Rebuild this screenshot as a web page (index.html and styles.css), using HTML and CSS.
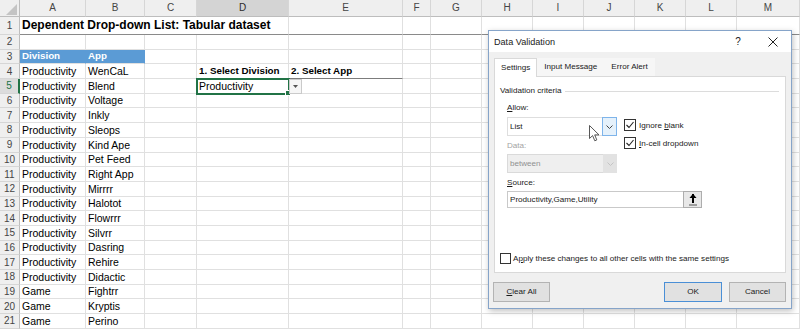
FILE: index.html
```html
<!DOCTYPE html>
<html>
  <head>
  <meta charset="utf-8">
  <title>Data Validation - Dependent Drop-down List</title>
  <link rel="stylesheet" href="styles.css">
  </head>
  <body>
  <div class="workbook">

    <table class="sheet">
      <colgroup>
        <col class="w-row"><col class="w-a"><col class="w-b"><col class="w-c"><col class="w-d"><col class="w-e"><col class="w-f">
        <col class="w-std"><col class="w-std"><col class="w-std"><col class="w-std"><col class="w-std"><col class="w-std"><col class="w-m">
      </colgroup>
      <tr class="r-head">
        <th class="corner"><svg width="12" height="12" viewBox="0 0 12 12"><path d="M12 1 L12 12 L1 12 Z" fill="#c4c4c4"/></svg></th>
        <th>A</th><th>B</th><th>C</th><th class="col-sel">D</th><th>E</th><th>F</th><th>G</th><th>H</th><th>I</th><th>J</th><th>K</th><th>L</th><th>M</th>
      </tr>
      <tr class="r-title">
        <th>1</th><td colspan="4" class="title">Dependent Drop-down List: Tabular dataset</td>
        <td></td><td></td><td></td><td></td><td></td><td></td><td></td><td></td><td></td>
      </tr>
      <tr><th>2</th><td></td><td></td><td></td><td></td><td></td><td></td><td></td><td></td><td></td><td></td><td></td><td></td><td></td></tr>
      <tr><th>3</th><td class="tbl-head">Division</td><td class="tbl-head">App</td><td></td><td></td><td></td><td></td><td></td><td></td><td></td><td></td><td></td><td></td><td></td></tr>
      <tr><th>4</th><td>Productivity</td><td>WenCaL</td><td></td><td class="prompt">1. Select Division</td><td class="prompt">2. Select App</td><td></td><td></td><td></td><td></td><td></td><td></td><td></td><td></td></tr>
      <tr><th class="row-sel">5</th><td>Productivity</td><td>Blend</td><td></td>
        <td class="active">Productivity<span class="handle"></span><span class="cell-drop"><svg width="5" height="3" viewBox="0 0 5 3"><path d="M0 0 H5 L2.5 3 Z" fill="#555"/></svg></span></td>
        <td></td><td></td><td></td><td></td><td></td><td></td><td></td><td></td><td></td></tr>
      <tr><th>6</th><td>Productivity</td><td>Voltage</td><td></td><td></td><td></td><td></td><td></td><td></td><td></td><td></td><td></td><td></td><td></td></tr>
      <tr><th>7</th><td>Productivity</td><td>Inkly</td><td></td><td></td><td></td><td></td><td></td><td></td><td></td><td></td><td></td><td></td><td></td></tr>
      <tr><th>8</th><td>Productivity</td><td>Sleops</td><td></td><td></td><td></td><td></td><td></td><td></td><td></td><td></td><td></td><td></td><td></td></tr>
      <tr><th>9</th><td>Productivity</td><td>Kind Ape</td><td></td><td></td><td></td><td></td><td></td><td></td><td></td><td></td><td></td><td></td><td></td></tr>
      <tr><th>10</th><td>Productivity</td><td>Pet Feed</td><td></td><td></td><td></td><td></td><td></td><td></td><td></td><td></td><td></td><td></td><td></td></tr>
      <tr><th>11</th><td>Productivity</td><td>Right App</td><td></td><td></td><td></td><td></td><td></td><td></td><td></td><td></td><td></td><td></td><td></td></tr>
      <tr><th>12</th><td>Productivity</td><td>Mirrrr</td><td></td><td></td><td></td><td></td><td></td><td></td><td></td><td></td><td></td><td></td><td></td></tr>
      <tr><th>13</th><td>Productivity</td><td>Halotot</td><td></td><td></td><td></td><td></td><td></td><td></td><td></td><td></td><td></td><td></td><td></td></tr>
      <tr><th>14</th><td>Productivity</td><td>Flowrrr</td><td></td><td></td><td></td><td></td><td></td><td></td><td></td><td></td><td></td><td></td><td></td></tr>
      <tr><th>15</th><td>Productivity</td><td>Silvrr</td><td></td><td></td><td></td><td></td><td></td><td></td><td></td><td></td><td></td><td></td><td></td></tr>
      <tr><th>16</th><td>Productivity</td><td>Dasring</td><td></td><td></td><td></td><td></td><td></td><td></td><td></td><td></td><td></td><td></td><td></td></tr>
      <tr><th>17</th><td>Productivity</td><td>Rehire</td><td></td><td></td><td></td><td></td><td></td><td></td><td></td><td></td><td></td><td></td><td></td></tr>
      <tr><th>18</th><td>Productivity</td><td>Didactic</td><td></td><td></td><td></td><td></td><td></td><td></td><td></td><td></td><td></td><td></td><td></td></tr>
      <tr><th>19</th><td>Game</td><td>Fightrr</td><td></td><td></td><td></td><td></td><td></td><td></td><td></td><td></td><td></td><td></td><td></td></tr>
      <tr><th>20</th><td>Game</td><td>Kryptis</td><td></td><td></td><td></td><td></td><td></td><td></td><td></td><td></td><td></td><td></td><td></td></tr>
      <tr><th>21</th><td>Game</td><td>Perino</td><td></td><td></td><td></td><td></td><td></td><td></td><td></td><td></td><td></td><td></td><td></td></tr>
    </table>

    <!-- Data Validation dialog -->
    <div class="dialog">
      <div class="dlg-title">
        <span class="dlg-name">Data Validation</span>
        <span class="dlg-help">?</span>
        <span class="dlg-close"><svg width="10" height="10" viewBox="0 0 10 10"><path d="M0.5 0.5 L9.5 9.5 M9.5 0.5 L0.5 9.5" stroke="#222" stroke-width="1" fill="none"/></svg></span>
      </div>
      <div class="dlg-body">
        <div class="tabs">
          <span class="tab active">Settings</span>
          <span class="tab">Input Message</span>
          <span class="tab">Error Alert</span>
        </div>
        <div class="panel">
          <div class="group-head">Validation criteria</div>
          <div class="criteria">
            <div class="criteria-left">
              <div class="label"><u>A</u>llow:</div>
              <div class="combo">
                <span class="combo-text">List</span>
                <span class="combo-btn hover"><svg width="7" height="4" viewBox="0 0 7 4"><path d="M0.5 0.5 L3.5 3.5 L6.5 0.5" stroke="#444" fill="none"/></svg></span>
              </div>
              <div class="label off">Data:</div>
              <div class="combo disabled">
                <span class="combo-text">between</span>
                <span class="combo-btn"><svg width="7" height="4" viewBox="0 0 7 4"><path d="M0.5 0.5 L3.5 3.5 L6.5 0.5" stroke="#c4c4c4" fill="none"/></svg></span>
              </div>
            </div>
            <div class="criteria-right">
              <div class="check">
                <span class="box"><svg width="10" height="10" viewBox="0 0 10 10"><path d="M1.5 5 L4 7.5 L8.5 2" stroke="#222" stroke-width="1.1" fill="none"/></svg></span>
                <span>Ignore <u>b</u>lank</span>
              </div>
              <div class="check">
                <span class="box"><svg width="10" height="10" viewBox="0 0 10 10"><path d="M1.5 5 L4 7.5 L8.5 2" stroke="#222" stroke-width="1.1" fill="none"/></svg></span>
                <span><u>I</u>n-cell dropdown</span>
              </div>
            </div>
          </div>
          <div class="field">
            <div class="label"><u>S</u>ource:</div>
            <div class="source">
              <span class="combo-text">Productivity,Game,Utility</span>
              <span class="ref-btn"><svg width="10" height="13" viewBox="0 0 10 13"><path d="M5 1 L5 10" stroke="#000" stroke-width="2"/><path d="M1.5 5 L5 0.8 L8.5 5 Z" fill="#000"/><path d="M1 12 H9" stroke="#555" stroke-width="1"/></svg></span>
            </div>
          </div>
          <div class="check apply">
            <span class="box small"></span>
            <span>A<u>p</u>ply these changes to all other cells with the same settings</span>
          </div>
        </div>
        <div class="buttons">
          <span class="btn clear"><u>C</u>lear All</span>
          <span class="btn ok">OK</span>
          <span class="btn">Cancel</span>
        </div>
      </div>
    </div>

    <svg class="cursor" width="11" height="17" viewBox="0 0 11 17"><path d="M0.5 0.5 L0.5 13.5 L3.6 10.6 L5.8 15.8 L7.8 14.9 L5.7 9.9 L10 9.9 Z" fill="#fff" stroke="#444" stroke-width="0.9"/></svg>
  </div>
  </body>
</html>
```

FILE: styles.css
```css
body {
  margin: 0;
  background-color: white;
  overflow: hidden;
}

.workbook {
  position: relative;
  width: 800px;
  height: 331px;
  overflow: hidden;
  font-family: "Liberation Sans", Arial, sans-serif;
}

/* ---------- spreadsheet ---------- */
.sheet {
  border-collapse: separate;
  border-spacing: 0;
  table-layout: fixed;
  width: 800px;
}
.w-row { width: 20px; }
.w-a { width: 66px; }
.w-b { width: 59px; }
.w-c { width: 52px; }
.w-d { width: 92px; }
.w-e { width: 114px; }
.w-f { width: 28px; }
.w-std { width: 51px; }
.w-m { width: 63px; }

.sheet tr { height: 14.7px; }
.sheet tr.r-head { height: 16.5px; }
.sheet tr.r-title { height: 18.5px; }

.sheet td {
  border-right: 1px solid #e0e0e0;
  border-bottom: 1px solid #e0e0e0;
  padding: 0 2px 1px 2px;
  font-size: 10.5px;
  line-height: 12px;
  vertical-align: bottom;
  white-space: nowrap;
  color: #000;
  overflow: visible;
}

.sheet th {
  background-color: #efefef;
  color: #454545;
  font-weight: normal;
  font-size: 10px;
  padding: 0;
  text-align: center;
  vertical-align: middle;
  border-right: 1px solid #d6d6d6;
  border-bottom: 1px solid #d6d6d6;
}
.sheet tr.r-head th {
  border-bottom: 1px solid #bdbdbd;
}
.sheet tr th:first-child {
  border-right: 1px solid #bdbdbd;
}
.sheet th.corner {
  text-align: right;
  vertical-align: bottom;
  padding: 0 2px 1px 0;
  line-height: 0;
}
.sheet th.col-sel {
  background-color: #d4d4d4;
  color: #2b2b2b;
  border-bottom: 2px solid #217346;
}
.sheet tr th.row-sel {
  background-color: #dcdcdc;
  color: #217346;
  border-right: 2px solid #217346;
}

.sheet td.title {
  font-weight: bold;
  font-size: 12px;
  line-height: 14px;
  padding-bottom: 2px;
}
.sheet tr.r-title td {
  border-bottom: 1px solid #8a8a8a;
}
.sheet td.tbl-head {
  background-color: #5b9bd5;
  border-right-color: #5b9bd5;
  color: white;
  font-weight: bold;
  font-size: 9.8px;
}
.sheet td.prompt {
  font-weight: bold;
  font-size: 9.8px;
  border-bottom: 1px solid #7c7c7c;
}
.sheet td.active {
  position: relative;
  outline: 2px solid #217346;
  outline-offset: -1px;
}
.handle {
  position: absolute;
  right: -3px;
  bottom: -3px;
  width: 4px;
  height: 4px;
  background-color: #217346;
  border: 1px solid white;
}
.cell-drop {
  position: absolute;
  top: 0;
  right: -14px;
  width: 11px;
  height: 13px;
  background-color: #f6f6f6;
  border: 1px solid #cacaca;
  display: flex;
  align-items: center;
  justify-content: center;
}

/* ---------- dialog ---------- */
.dialog {
  position: absolute;
  left: 488px;
  top: 30px;
  width: 304px;
  height: 279px;
  box-sizing: border-box;
  border: 1px solid #86a4c9;
  background-color: #f0f0f0;
  box-shadow: 1px 2px 6px rgba(0, 0, 0, 0.25);
  font-size: 8.1px;
  color: #1a1a1a;
}

.dlg-title {
  height: 21px;
  background-color: white;
  display: flex;
  align-items: center;
  padding-left: 5px;
}
.dlg-name {
  font-size: 9.1px;
  flex: 1;
}
.dlg-help {
  width: 10px;
  text-align: center;
  font-size: 10px;
}
.dlg-close {
  width: 20px;
  margin-left: 20px;
  margin-right: 8px;
  display: flex;
  justify-content: center;
}

.dlg-body {
  padding: 6px 5px 0 5px;
}

.tabs {
  display: flex;
  height: 19px;
  margin-bottom: -1px;
  position: relative;
  z-index: 1;
}
.tab {
  height: 18px;
  line-height: 18px;
  padding: 0 7px;
  background-color: #f6f6f6;
}
.tab.active {
  padding: 0 6px;
  height: 19px;
  background-color: white;
  border: 1px solid #d9d9d9;
  border-bottom: none;
  box-sizing: border-box;
  line-height: 17px;
}

.panel {
  height: 197px;
  box-sizing: border-box;
  border: 1px solid #d9d9d9;
  background-color: white;
  padding: 0 5px;
}

.group-head {
  margin-top: 7px;
  height: 14px;
  line-height: 14px;
  display: flex;
  align-items: center;
}
.group-head::after {
  content: "";
  flex: 1;
  border-top: 1px solid #dcdcdc;
  margin-left: 4px;
  margin-right: 1px;
}

.label {
  height: 12px;
  line-height: 12px;
  margin-top: 4px;
}
.label.off {
  color: #a3a3a3;
}

.criteria {
  display: flex;
  padding-left: 7px;
}
.criteria-left {
  width: 110px;
}
.criteria-right {
  margin-left: 7px;
  padding-top: 21px;
  display: flex;
  flex-direction: column;
  gap: 6px;
}

.combo {
  margin-top: 3px;
  height: 19px;
  box-sizing: border-box;
  border: 1px solid #dedede;
  display: flex;
  align-items: stretch;
}
.combo.disabled {
  margin-top: 2px;
  background-color: #efefef;
  border-color: #dadada;
  color: #8f8f8f;
}
.combo-text {
  flex: 1;
  padding-left: 2px;
  line-height: 17px;
  white-space: nowrap;
}
.combo-btn {
  width: 14px;
  display: flex;
  align-items: center;
  justify-content: center;
  margin: -1px -1px -1px 0;
}
.combo-btn.hover {
  background-color: #e5f1fb;
  border: 1px solid #7eb4ea;
  width: 13px;
}
.combo.disabled .combo-btn {
  background-color: #e2e2e2;
}

.check {
  display: flex;
  align-items: center;
  height: 12px;
  gap: 3px;
  white-space: nowrap;
}
.box {
  width: 12px;
  height: 12px;
  box-sizing: border-box;
  border: 1px solid #333;
  background-color: white;
  display: flex;
  align-items: center;
  justify-content: center;
}
.box.small {
  width: 11px;
  height: 11px;
}

.field {
  padding-left: 7px;
}
.source {
  margin-top: 2px;
  width: 195px;
  height: 17px;
  box-sizing: border-box;
  border: 1px solid #c9c9c9;
  display: flex;
}
.source .combo-text {
  line-height: 15px;
}
.ref-btn {
  width: 17px;
  margin: -1px -1px -1px 0;
  background-color: #e8e8e8;
  border: 1px solid #adadad;
  display: flex;
  align-items: center;
  justify-content: center;
}

.check.apply {
  margin-top: 45px;
  height: 11px;
  gap: 2px;
}

.buttons {
  display: flex;
  margin-top: 9px;
  gap: 7px;
}
.btn {
  height: 20px;
  box-sizing: border-box;
  width: 57px;
  border: 1px solid #b3b3b3;
  background-color: #e1e1e1;
  text-align: center;
  line-height: 18px;
}
.btn.clear {
  margin-left: -1px;
}
.btn.ok {
  margin-left: auto;
  width: 58px;
  border-color: #4a8fd6;
}

.cursor {
  position: absolute;
  left: 589px;
  top: 125px;
}
```
